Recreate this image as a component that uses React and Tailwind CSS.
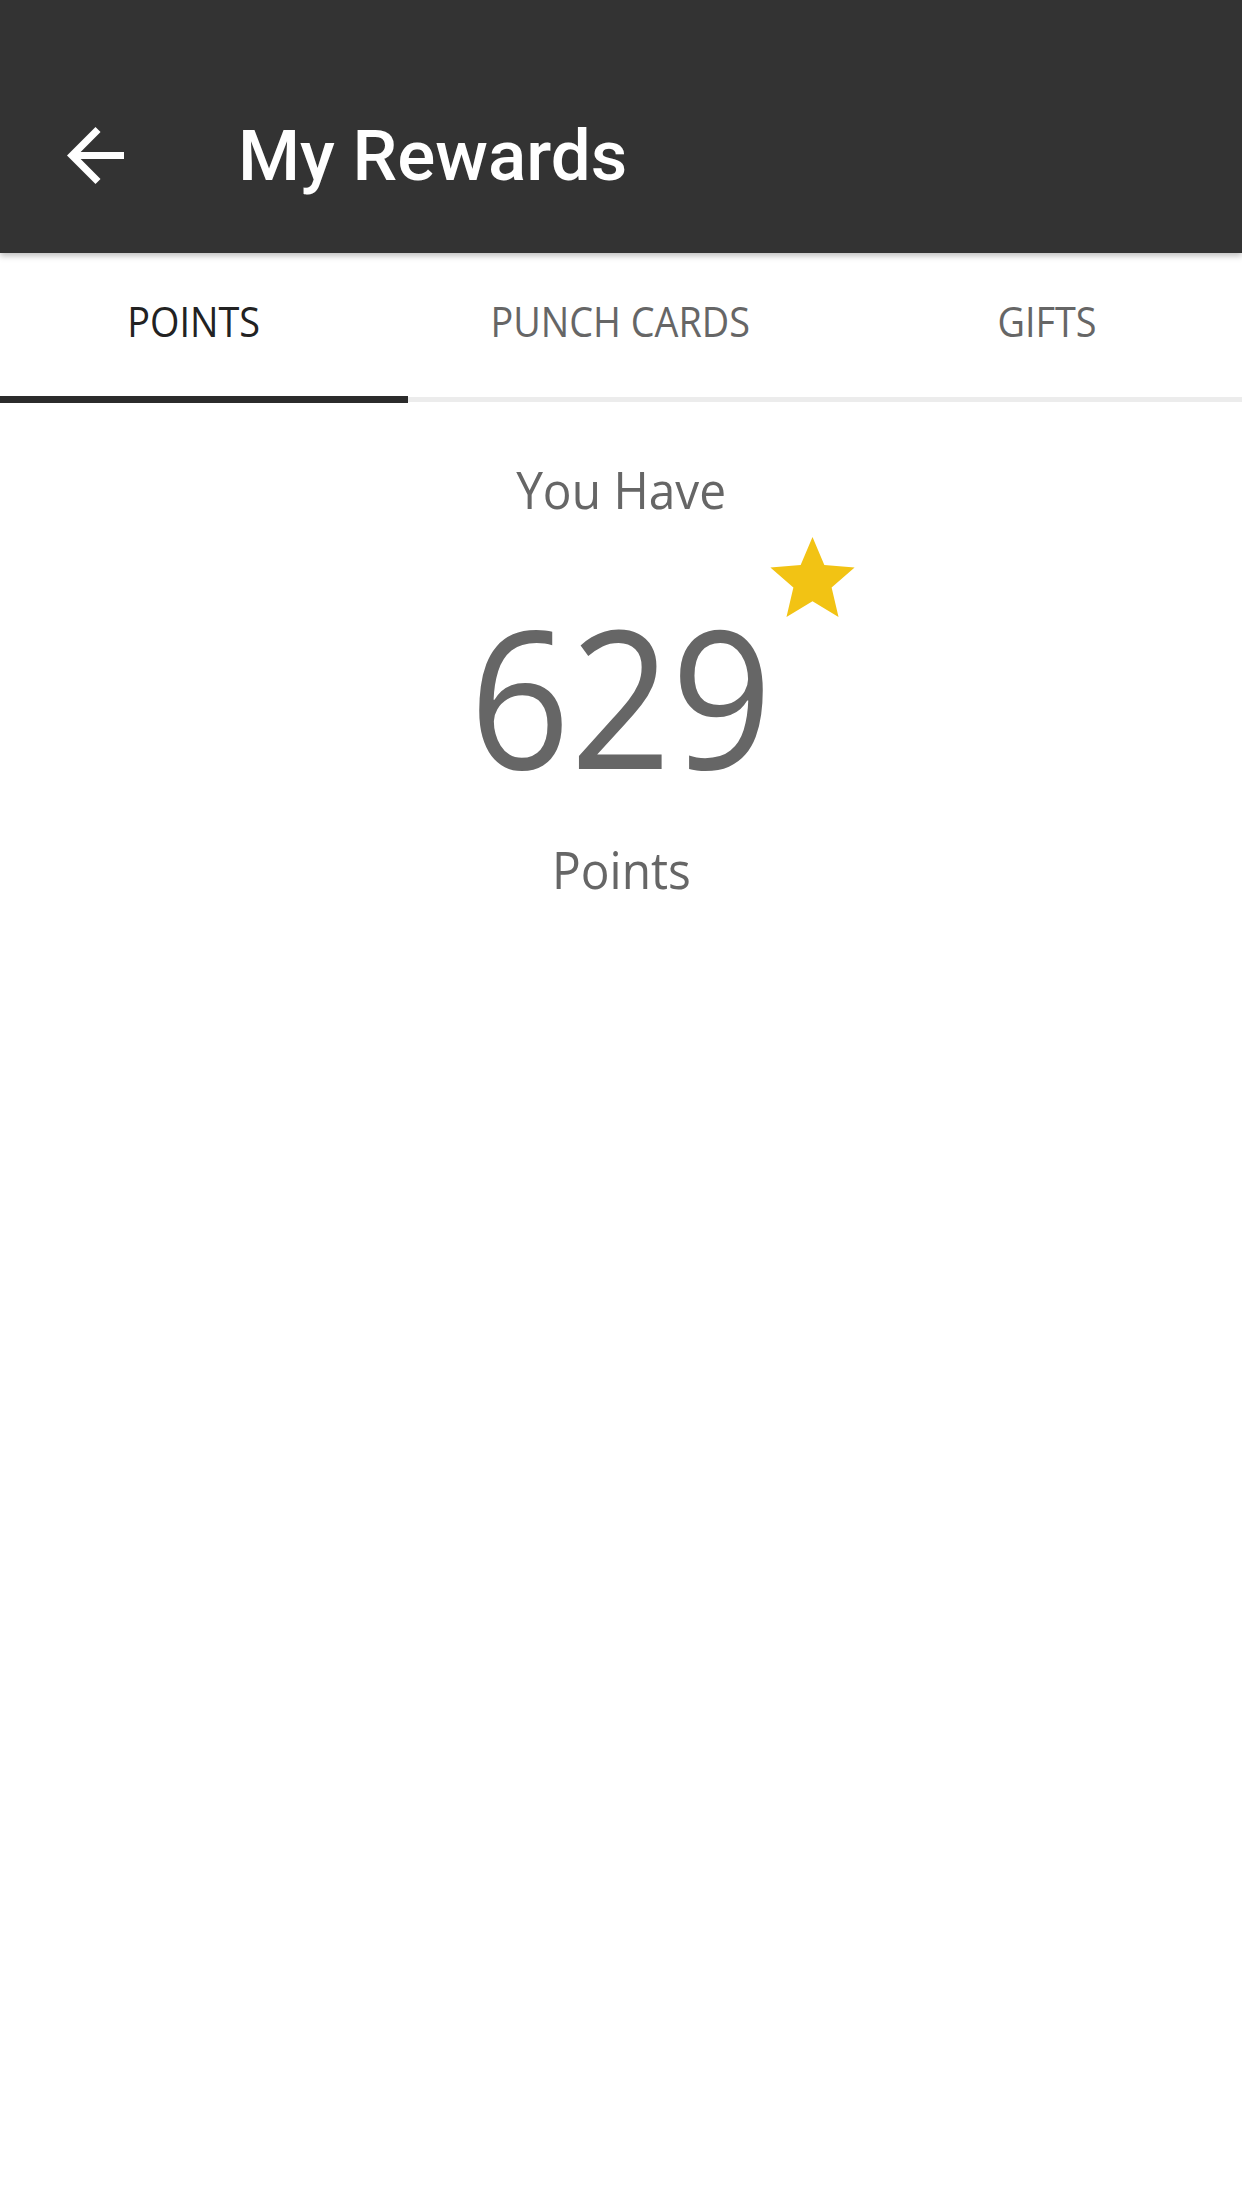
import { useState } from 'react';

const tabs = [
  { label: 'POINTS', width: 'w-[408px]', pad: 'pr-[20px]' },
  { label: 'PUNCH CARDS', width: 'flex-1', pad: 'pl-[7px]' },
  { label: 'GIFTS', width: 'flex-1', pad: 'pl-[27px]' },
];

const BackArrow = () => (
  <svg viewBox="4 4 16 16" width="57" height="57" fill="#ffffff">
    <path d="M20 11H7.83l5.59-5.59L12 4l-8 8 8 8 1.41-1.41L7.83 13H20v-2z" />
  </svg>
);

const Star = () => (
  <svg viewBox="2 2 20 19" width="85" height="80" fill="#f2c314">
    <path d="M12 17.27L18.18 21l-1.64-7.03L22 9.24l-7.19-.61L12 2 9.19 8.63 2 9.24l5.46 4.73L5.82 21z" />
  </svg>
);

const App = () => {
  const [active, setActive] = useState(0);
  const points = 629;

  return (
    <div className="min-h-screen bg-white font-['Open_Sans',sans-serif]">
      {/* toolbar */}
      <header className="relative z-10 bg-[#333333] pt-[58px] shadow-[0_3px_6px_rgba(0,0,0,0.25)]">
        <div className="flex h-[195px] items-center">
          <button className="ml-[67px] flex items-center">
            <BackArrow />
          </button>
          <h1 className="ml-[114px] font-['Roboto',sans-serif] text-[71px] font-medium leading-none text-white">
            My Rewards
          </h1>
        </div>
      </header>

      {/* tabs */}
      <nav className="flex">
        {tabs.map((tab, i) => (
          <button key={tab.label} onClick={() => setActive(i)} className={`${tab.width} flex flex-col`}>
            <div className={`flex h-[143px] w-full items-center justify-center pb-[8px] ${tab.pad}`}>
              <span
                className={`inline-block scale-x-[0.9] whitespace-nowrap text-[42px] font-medium leading-none ${
                  active === i ? 'text-[#222222]' : 'text-[#666666]'
                }`}
              >
                {tab.label}
              </span>
            </div>
            {active === i ? (
              <div className="h-[7px] w-full bg-[#2b2b2b]" />
            ) : (
              <div className="my-[1px] h-[5px] w-full bg-[#ececec]" />
            )}
          </button>
        ))}
      </nav>

      {/* points */}
      <main className="flex flex-col items-center pt-[60px] font-medium text-[#666666]">
        <p className="scale-x-[0.92] text-[52px] leading-none">You Have</p>
        <div className="relative mt-[84px]">
          <span className="block scale-x-[0.92] text-[192px] leading-none">{points}</span>
          <div className="absolute left-full top-[-62px] ml-[-16px]">
            <Star />
          </div>
        </div>
        <p className="mt-[52px] scale-x-[0.92] text-[52px] leading-none">Points</p>
      </main>
    </div>
  );
};

export default App;
